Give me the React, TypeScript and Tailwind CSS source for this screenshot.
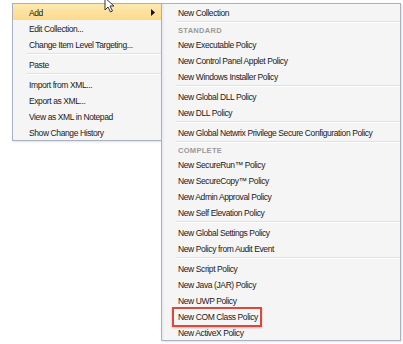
type Item = { kind: "item"; label: string; boxed?: boolean } | { kind: "sep" } | { kind: "head"; label: string };

const mainItems: Item[] = [
  { kind: "item", label: "Edit Collection..." },
  { kind: "item", label: "Change Item Level Targeting..." },
  { kind: "sep" },
  { kind: "item", label: "Paste" },
  { kind: "sep" },
  { kind: "item", label: "Import from XML..." },
  { kind: "item", label: "Export as XML..." },
  { kind: "item", label: "View as XML in Notepad" },
  { kind: "item", label: "Show Change History" },
];

const subItems: Item[] = [
  { kind: "item", label: "New Collection" },
  { kind: "sep" },
  { kind: "head", label: "STANDARD" },
  { kind: "item", label: "New Executable Policy" },
  { kind: "item", label: "New Control Panel Applet Policy" },
  { kind: "item", label: "New Windows Installer Policy" },
  { kind: "sep" },
  { kind: "item", label: "New Global DLL Policy" },
  { kind: "item", label: "New DLL Policy" },
  { kind: "sep" },
  { kind: "item", label: "New Global Netwrix Privilege Secure Configuration Policy" },
  { kind: "sep" },
  { kind: "head", label: "COMPLETE" },
  { kind: "item", label: "New SecureRun\u2122 Policy" },
  { kind: "item", label: "New SecureCopy\u2122 Policy" },
  { kind: "item", label: "New Admin Approval Policy" },
  { kind: "item", label: "New Self Elevation Policy" },
  { kind: "sep" },
  { kind: "item", label: "New Global Settings Policy" },
  { kind: "item", label: "New Policy from Audit Event" },
  { kind: "sep" },
  { kind: "item", label: "New Script Policy" },
  { kind: "item", label: "New Java (JAR) Policy" },
  { kind: "item", label: "New UWP Policy" },
  { kind: "item", label: "New COM Class Policy", boxed: true },
  { kind: "item", label: "New ActiveX Policy" },
];

function Rows({ items }: { items: Item[] }) {
  return (
    <>
      {items.map((it, i) => {
        if (it.kind === "sep")
          return (
            <div key={i} className="h-[4px] pl-[14px] flex flex-col justify-center">
              <div className="h-px bg-[#dde2ea]" />
              <div className="h-px bg-white" />
            </div>
          );
        if (it.kind === "head")
          return (
            <div key={i} className="h-[12px] pl-[16px] pt-[2px] flex items-center text-[7.5px] font-bold tracking-[0.3px] text-[#9a9a9a] whitespace-nowrap">
              {it.label}
            </div>
          );
        return (
          <div key={i} className="h-[16px] pl-[16px] pt-[3px] flex items-center whitespace-nowrap">
            <span className={it.boxed ? "relative" : ""}>
              {it.boxed && (
                <span className="absolute -left-[6px] -right-[4px] -top-[4px] -bottom-[3px] border-2 border-[#d9493d] shadow-[0_1px_2px_rgba(0,0,0,0.25)]" />
              )}
              {it.label}
            </span>
          </div>
        );
      })}
    </>
  );
}

export default function App() {
  return (
    <div
      className="relative w-[403px] h-[344px] bg-white overflow-hidden text-[8.5px] tracking-[-0.4px] text-[#1a1a1a]"
      style={{ fontFamily: '"Liberation Sans", Arial, sans-serif' }}
    >
      {/* main context menu */}
      <div className="absolute left-[12px] top-[3px] w-[150px] border border-[#a9b0bf] bg-[#f5f5f5] shadow-[1px_1px_2px_rgba(0,0,0,0.12)] flex">
        <div className="flex-1">
          <div className="h-[16px] pl-[16px] pr-[6px] pt-[3px] flex items-center justify-between bg-gradient-to-b from-[#fde9b0] to-[#fcd98b]">
            <span>Add</span>
            <svg width="4" height="7" viewBox="0 0 4 7" className="-mt-[3px]">
              <path d="M0 0 L4 3.5 L0 7 Z" fill="#111" />
            </svg>
          </div>
          <Rows items={mainItems} />
        </div>
      </div>

      {/* submenu */}
      <div className="absolute left-[161px] top-[3px] w-[240px] border border-[#a9b0bf] bg-[#f5f5f5] shadow-[1px_1px_2px_rgba(0,0,0,0.12)] flex">
        <div className="w-[3px] bg-gradient-to-r from-[#e6e9ef] to-[#f5f5f5]" />
        <div className="flex-1 -ml-[3px]">
          <Rows items={subItems} />
        </div>
      </div>

      {/* mouse cursor */}
      <svg className="absolute left-[104px] top-[-3px]" width="12" height="17" viewBox="0 0 12 17">
        <path d="M1 1 L1 13 L4 10 L6.5 15 L8.5 14 L6 9 L10 9 Z" fill="#fff" stroke="#333" strokeWidth="1" strokeLinejoin="round" />
      </svg>
    </div>
  );
}
